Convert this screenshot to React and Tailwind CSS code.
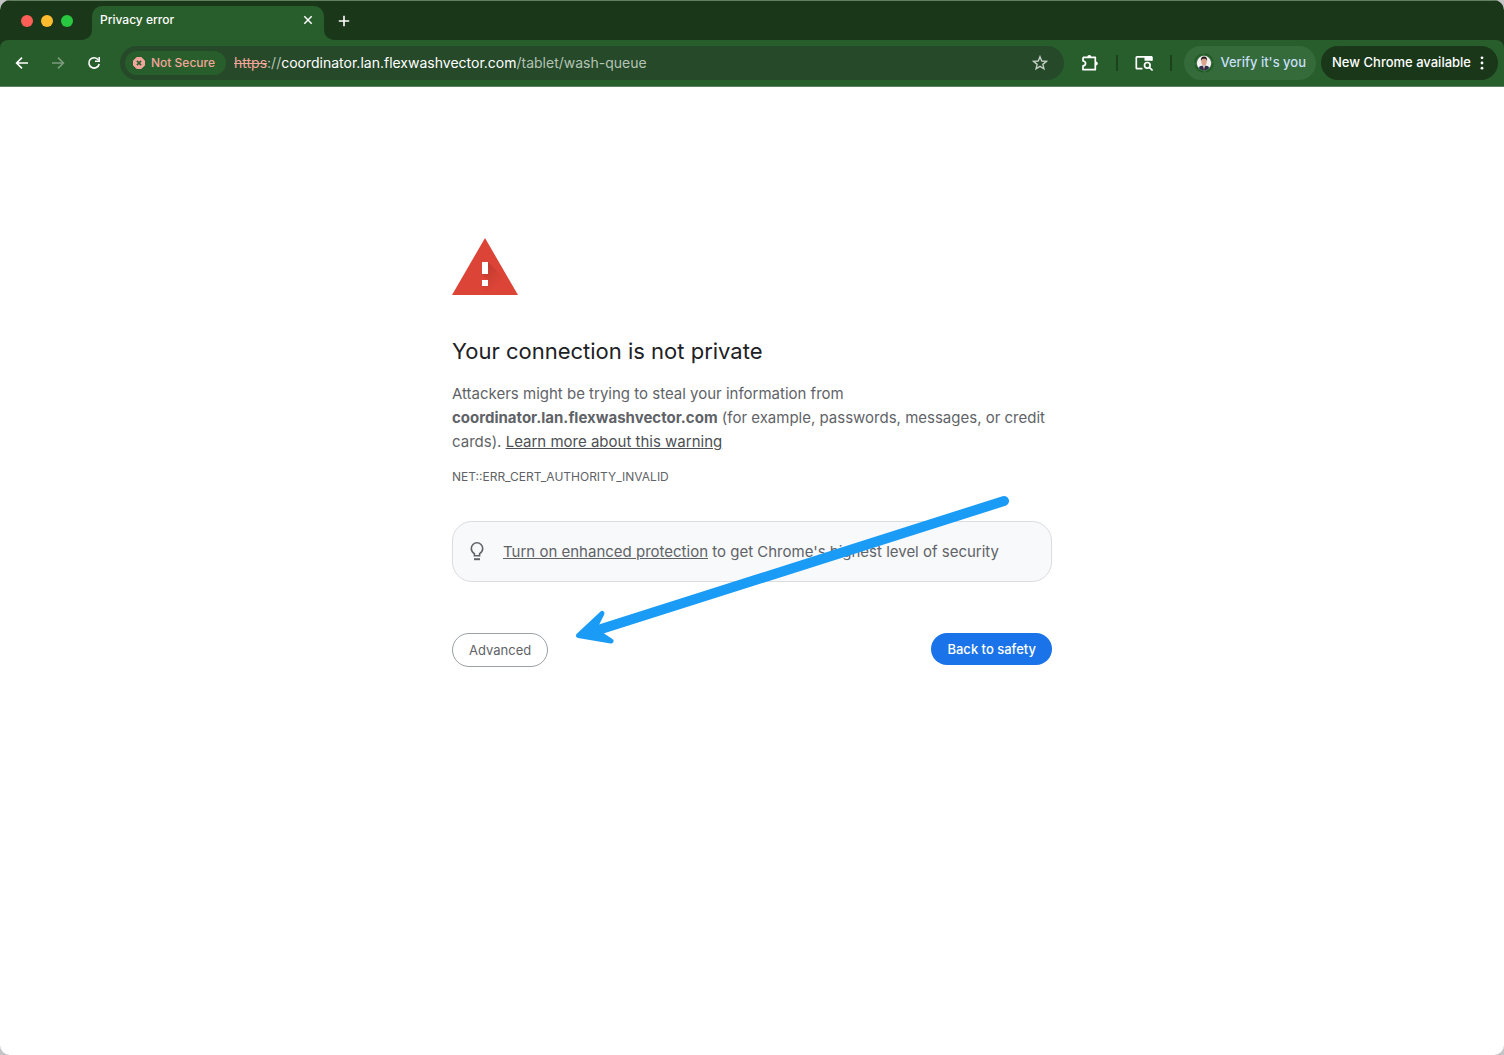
import React, { useState } from 'react';

const Icon = ({ size = 16, className = '', children }) => (
    <svg
        width={size}
        height={size}
        viewBox="0 0 16 16"
        fill="none"
        stroke="currentColor"
        strokeWidth="1.6"
        className={className}
        aria-hidden="true"
    >
        {children}
    </svg>
);

const ToolbarButton = ({ label, className = '', children }) => (
    <button
        type="button"
        aria-label={label}
        className={`flex h-7 w-7 shrink-0 items-center justify-center rounded-full ${className}`}
    >
        {children}
    </button>
);

const TabStrip = () => (
    <div className="flex h-10 items-center border-t border-[#60805f] bg-[#1a371a] pl-[21px]">
        <div className="flex gap-2">
            <button type="button" aria-label="Close window" className="h-3 w-3 rounded-full bg-[#ff5f57]" />
            <button type="button" aria-label="Minimize window" className="h-3 w-3 rounded-full bg-[#febc2e]" />
            <button type="button" aria-label="Zoom window" className="h-3 w-3 rounded-full bg-[#28c840]" />
        </div>
        <div className="relative ml-[19px] flex h-[34px] w-58 items-center justify-between self-end rounded-t-[10px] bg-[#285e2b] pr-2 pb-[6px] pl-2 text-white">
            <svg width="10" height="10" viewBox="0 0 10 10" className="absolute bottom-0 -left-[10px]" aria-hidden="true">
                <path d="M10 0v10H0A10 10 0 0 0 10 0z" fill="#285e2b" />
            </svg>
            <svg width="10" height="10" viewBox="0 0 10 10" className="absolute -right-[10px] bottom-0" aria-hidden="true">
                <path d="M0 0v10h10A10 10 0 0 1 0 0z" fill="#285e2b" />
            </svg>
            <span className="text-xs font-medium">Privacy error</span>
            <button type="button" aria-label="Close tab">
                <Icon>
                    <path d="M4.3 4.3l7.4 7.4M11.7 4.3l-7.4 7.4" strokeWidth="1.5" />
                </Icon>
            </button>
        </div>
        <button type="button" aria-label="New tab" className="ml-3 text-white">
            <Icon>
                <path d="M8 2.8v10.4M2.8 8h10.4" />
            </Icon>
        </button>
    </div>
);

const AddressBar = () => {
    const [query, setQuery] = useState('');

    return (
        <div className="ml-1 flex h-[34px] min-w-0 flex-1 items-center rounded-full bg-[#26492a] pr-[10px] pl-[5px]">
            <button
                type="button"
                className="flex h-6 shrink-0 items-center gap-[5px] rounded-full bg-[#285e2b] pr-[11px] pl-[7px] text-xs font-medium text-[#f2a59b]"
            >
                <svg width="14" height="14" viewBox="0 0 14 14" aria-hidden="true">
                    <path d="M4.7 1.500h4.600L12.500 4.700v4.600L9.300 12.500H4.700L1.500 9.300V4.700z" fill="currentColor" stroke="currentColor" strokeLinejoin="round" />
                    <path d="M4.900 4.900l4.200 4.200M9.100 4.900l-4.200 4.200" stroke="#285e2b" strokeWidth="1.500" />
                </svg>
                Not Secure
            </button>
            <label htmlFor="omnibox" className="ml-2 truncate text-sm text-[#b4c3b4]">
                <span className="text-[#f2a59b] line-through">https</span>://
                <span className="text-white">coordinator.lan.flexwashvector.com</span>/tablet/wash-queue
            </label>
            <input
                id="omnibox"
                type="text"
                value={query}
                onChange={(e) => setQuery(e.target.value)}
                autoComplete="off"
                className="min-w-0 flex-1 bg-transparent text-sm text-white outline-none"
            />
            <ToolbarButton label="Bookmark this tab" className="text-[#c3cdc2]">
                <Icon>
                    <path d="M8 1.700l1.750 4.300 4.650.350-3.550 3 1.100 4.500L8 11.400l-3.950 2.450 1.100-4.500-3.550-3L6.250 6z" strokeWidth="1.400" />
                </Icon>
            </ToolbarButton>
        </div>
    );
};

const Toolbar = () => (
    <div className="bg-[#1a371a]">
        <div className="flex h-[47px] items-center gap-2 rounded-t-lg border-b border-[#5b8560] bg-[#285e2b] pr-[6px] pl-2 text-white">
            <ToolbarButton label="Back">
                <Icon>
                    <path d="M14 8H3M8 2.600L2.600 8 8 13.400" />
                </Icon>
            </ToolbarButton>
            <ToolbarButton label="Forward" className="text-[#7b9b7d]">
                <Icon>
                    <path d="M2 8h11M8 2.600L13.400 8 8 13.400" />
                </Icon>
            </ToolbarButton>
            <ToolbarButton label="Reload">
                <Icon>
                    <path d="M12.300 4.800A5.200 5.200 0 1 0 13.200 9" />
                    <path d="M13.200 2v4.200H9" />
                </Icon>
            </ToolbarButton>
            <AddressBar />
            <div className="flex shrink-0 items-center gap-3">
                <ToolbarButton label="Extensions" className="ml-1">
                    <svg width="20" height="20" viewBox="0 0 20 20" fill="none" aria-hidden="true">
                        <path
                            d="M3 4.300h12.300v4.200M15.300 12v4.700H3v-3.900c3.400-.2 3.400-4.600 0-4.800V4.300M15.300 8v5"
                            stroke="currentColor"
                            strokeWidth="1.700"
                            strokeLinejoin="round"
                        />
                        <path d="M7.300 4a2 2 0 0 1 4 0zM15.800 8.500a2 2 0 0 1 0 4z" fill="currentColor" />
                    </svg>
                </ToolbarButton>
                <span className="h-4 w-[2px] bg-[#1a431d]" />
                <ToolbarButton label="Search side panel">
                    <svg width="20" height="20" viewBox="0 0 20 20" fill="none" stroke="currentColor" strokeWidth="1.700" aria-hidden="true">
                        <path d="M8.500 15.700H3a.7.7 0 0 1-.7-.7V4.500a.7.700 0 0 1 .7-.7H17a.7.7 0 0 1 .7.700V7.500" />
                        <path d="M10.500 3h6.600a1.400 1.400 0 0 1 1.400 1.400V7.700h-8z" fill="currentColor" stroke="none" />
                        <circle cx="13.300" cy="12.300" r="2.800" />
                        <path d="M15.300 14.300l3.300 3.200" />
                    </svg>
                </ToolbarButton>
                <span className="h-4 w-[2px] bg-[#1a431d]" />
                <button
                    type="button"
                    className="flex h-[34px] items-center gap-[6px] rounded-full bg-[#356a3b] pr-[10px] pl-[10px] text-[13px] font-medium text-[#c8dff6]"
                >
                    <svg width="20" height="20" viewBox="0 0 20 20" aria-hidden="true">
                        <circle cx="10" cy="10" r="9" fill="none" stroke="#1f5a24" strokeWidth="1.500" strokeDasharray="12 2.130" />
                        <circle cx="10" cy="10" r="7.200" fill="#f4f1f2" />
                        <path d="M4.800 15a7.200 7.200 0 0 0 10.400 0c-.6-2-2.200-2.600-5.200-2.600S5.400 13 4.800 15z" fill="#28304a" />
                        <path d="M8.600 12.400h2.800L10 16.300z" fill="#fff" />
                        <path d="M9.700 13h.6l.3 3-.6.900-.6-.9z" fill="#a33245" />
                        <ellipse cx="10" cy="8.800" rx="2.700" ry="3.600" fill="#dba58c" />
                        <path d="M7 8.300c-.6-3.300.8-4.900 3-4.900s3.600 1.600 3 4.900c-.5-2-1.200-2.500-3-2.500s-2.500.5-3 2.500z" fill="#241c1c" />
                    </svg>
                    Verify it's you
                </button>
                <button
                    type="button"
                    className="-ml-[7px] flex h-[34px] items-center gap-[3px] rounded-full bg-[#1a371a] pr-2 pl-[11px] text-[13px] font-medium text-white"
                >
                    New Chrome available
                    <Icon>
                        <g fill="currentColor" stroke="none">
                            <circle cx="8" cy="2.800" r="1.400" />
                            <circle cx="8" cy="8" r="1.400" />
                            <circle cx="8" cy="13.200" r="1.400" />
                        </g>
                    </Icon>
                </button>
            </div>
        </div>
    </div>
);

const WarningIcon = () => (
    <svg width="66" height="57" viewBox="0 0 66 57" aria-hidden="true">
        <defs>
            <linearGradient id="shade" x1="33" y1="30" x2="47" y2="44" gradientUnits="userSpaceOnUse">
                <stop offset="0" stopColor="#c23b2f" />
                <stop offset="1" stopColor="#db4437" />
            </linearGradient>
        </defs>
        <path d="M33 0l33 57H0z" fill="#db4437" />
        <path d="M36 24l17.500 17.500L63 57H38l-8-9h6v-6l-6-6h6z" fill="url(#shade)" />
        <path d="M30 24h6v12h-6zM30 42h6v6h-6z" fill="#fff" />
    </svg>
);

const Arrow = () => (
    <svg
        width="440"
        height="156"
        viewBox="0 0 440 156"
        className="pointer-events-none absolute -top-[29px] left-30"
        fill="none"
        stroke="#1a9bf5"
        strokeLinecap="round"
        strokeLinejoin="round"
        aria-hidden="true"
    >
        <path d="M432 9L26 138" strokeWidth="10" />
        <path d="M6.500 143.500L30 121.500L22 137.500L27 141L39 149z" fill="#1a9bf5" strokeWidth="5" />
    </svg>
);

const Interstitial = () => (
    <main className="mx-auto w-full max-w-[600px] pt-[151px] text-[15px] leading-6 text-[#5f6368]">
        <WarningIcon />
        <h1 className="mt-10 text-[22px] leading-8 text-[#202124]">Your connection is not private</h1>
        <p className="mt-[15px]">
            Attackers might be trying to steal your information from{' '}
            <strong className="font-bold">coordinator.lan.flexwashvector.com</strong> (for example, passwords,
            messages, or credit cards).{' '}
            <a href="#learn-more" className="text-[#4d5054] underline">
                Learn more about this warning
            </a>
        </p>
        <p className="mt-3 text-xs leading-[22px]">NET::ERR_CERT_AUTHORITY_INVALID</p>
        <div className="relative mt-[33px]">
            <div className="flex items-center gap-4 rounded-[20px] border border-[#dadce0] bg-[#f8f9fa] px-[14px] pt-[18px] pb-[17px]">
                <svg width="20" height="20" viewBox="0 0 20 20" fill="none" stroke="currentColor" className="shrink-0" aria-hidden="true">
                    <path d="M7.400 13.700v-2.100C5.300 10.400 4.300 8.700 4.300 6.500a5.700 5.700 0 0 1 11.400 0c0 2.200-1 3.900-3.100 5.100v2.100z" strokeWidth="1.600" />
                    <path d="M7 17.200h6" strokeWidth="2" />
                </svg>
                <p>
                    <a href="#enhanced-protection" className="underline">Turn on enhanced protection</a> to get
                    Chrome's highest level of security
                </p>
            </div>
            <div className="mt-[51px] flex items-start justify-between text-[13px] leading-5">
                <button type="button" className="rounded-full border border-[#9aa0a6] px-4 py-[6px]">
                    Advanced
                </button>
                <button type="button" className="rounded-full bg-[#1a73e8] px-4 py-[6px] font-medium text-white">
                    Back to safety
                </button>
            </div>
            <Arrow />
        </div>
    </main>
);

const App = () => (
    <div className="min-h-screen bg-[#c4c4c6] font-['Inter','Liberation_Sans',sans-serif]">
        <div className="min-h-screen overflow-hidden rounded-[10px] bg-white">
            <TabStrip />
            <Toolbar />
            <Interstitial />
        </div>
    </div>
);

export default App;
